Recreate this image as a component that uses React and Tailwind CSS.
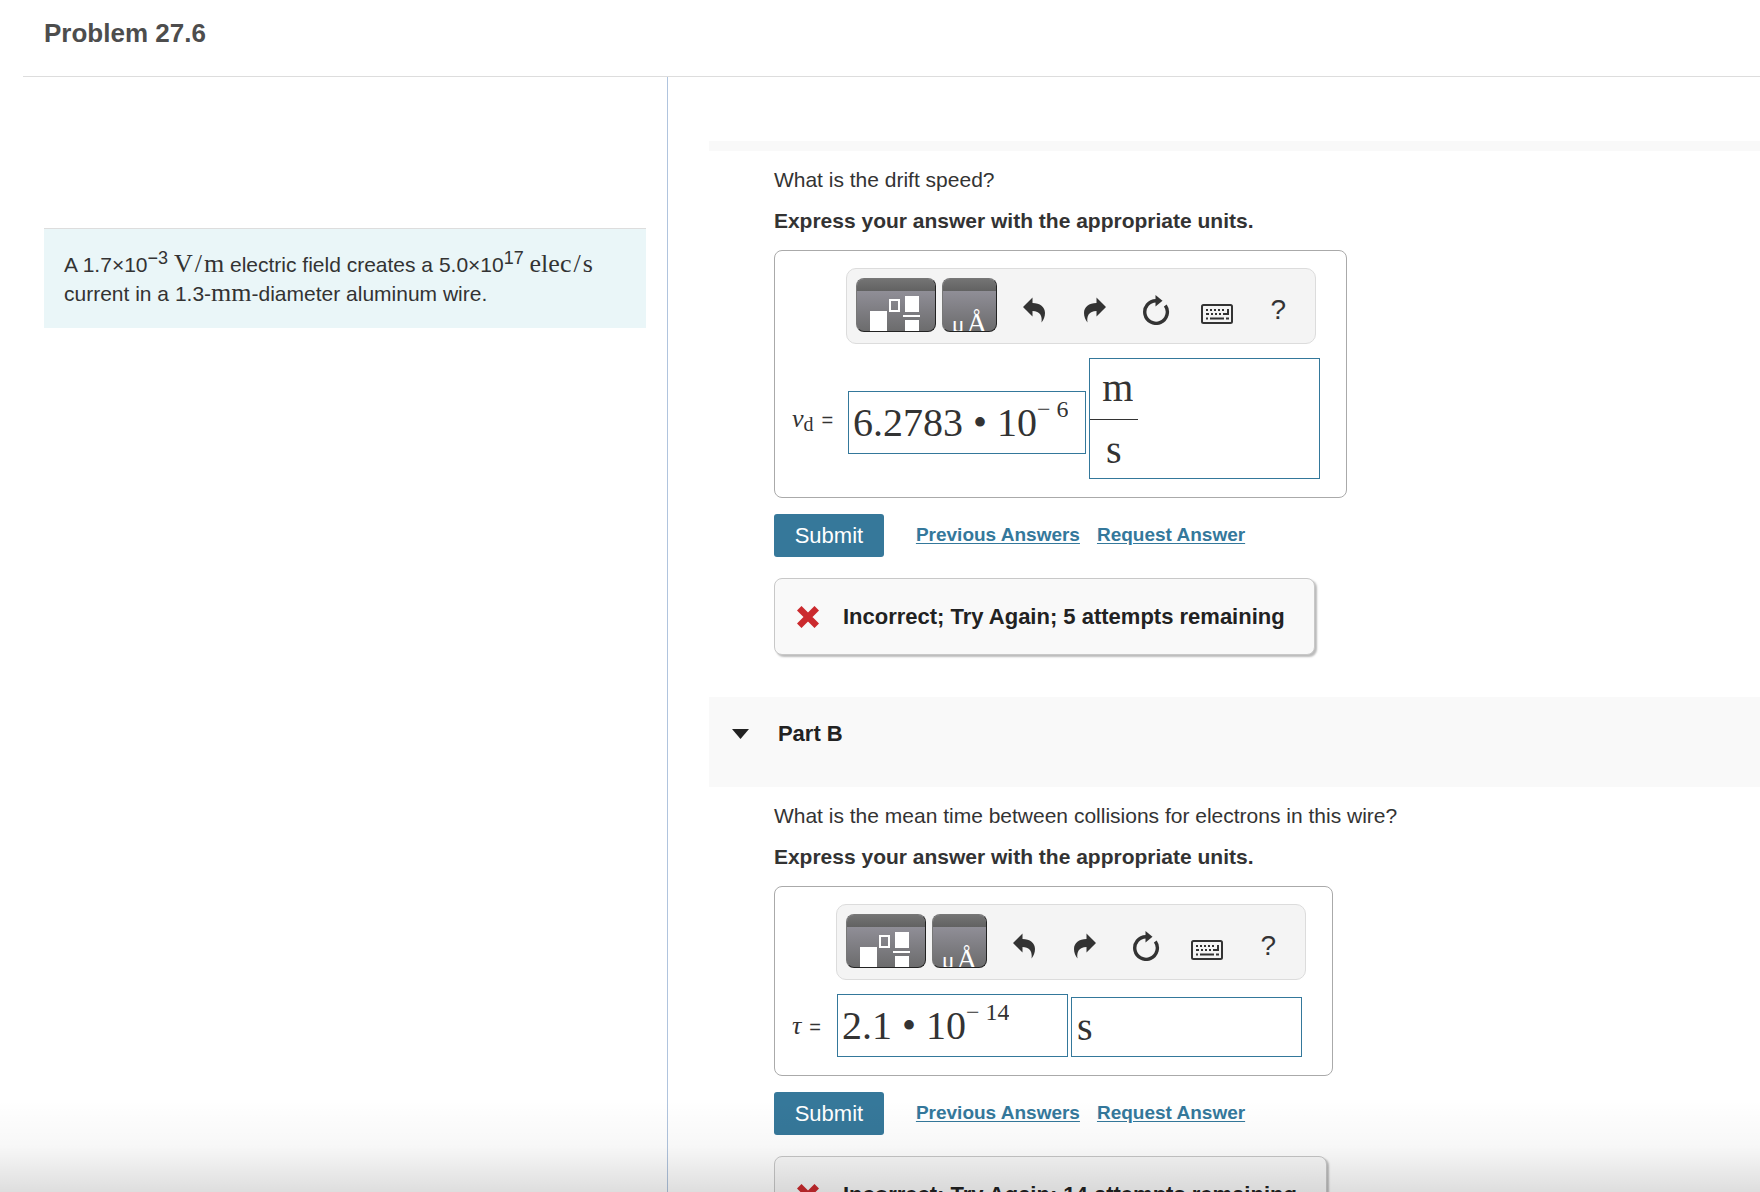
import React from 'react';

const SERIF = "font-['Liberation_Serif',serif]";

const UndoIcon = ({ className = '' }) => (
  <svg width="24" height="26" viewBox="0 0 24 26" fill="#333" aria-hidden="true" className={className}>
    <path d="M1 10 L10.500 0.500 V6 C18 6 23 10 23 16 C23 20 21.500 23 19.500 25.500 C20.500 19 18 14 10.500 14 V19.500 Z" />
  </svg>
);

const ResetIcon = () => (
  <svg width="28" height="30" viewBox="0 0 28 30" fill="none" aria-hidden="true">
    <path d="M23.300 10.500 A11.300 11.300 0 1 1 14 5.700" stroke="#333" strokeWidth="3.400" />
    <path d="M13.500 0 L20.500 5.800 L13.500 11.500 Z" fill="#333" />
  </svg>
);

const KeyboardIcon = () => (
  <svg width="32" height="20" viewBox="0 0 32 20" fill="none" aria-hidden="true">
    <rect x="1" y="1" width="30" height="18" rx="1.500" stroke="#333" strokeWidth="2" />
    <path d="M5 6 H24" stroke="#333" strokeWidth="2" strokeDasharray="2 2" />
    <path d="M5 10 H8 M10 10 H12 M14 10 H16 M18 10 H20 M22 10 H28 M5 14.500 H7 M9 14.500 H23 M25 14.500 H28" stroke="#333" strokeWidth="2" />
    <path d="M27 5 V11" stroke="#333" strokeWidth="2" />
  </svg>
);

const TemplateIcon = () => (
  <svg width="78" height="41" viewBox="0 0 78 41" fill="none" aria-hidden="true">
    <rect x="13" y="20" width="17" height="21" fill="#fff" />
    <rect x="33" y="9" width="9" height="11" stroke="#fff" strokeWidth="2" />
    <rect x="48" y="5" width="14" height="16" fill="#fff" />
    <path d="M46 25 H63" stroke="#fff" strokeWidth="2" />
    <rect x="48" y="29" width="14" height="12" fill="#fff" />
  </svg>
);

const WrongIcon = () => (
  <svg width="22" height="22" viewBox="0 0 22 22" aria-hidden="true">
    <path d="M4.500 4.500 L17.500 17.500 M17.500 4.500 L4.500 17.500" stroke="#cb2a2e" strokeWidth="6.400" strokeLinecap="square" strokeLinejoin="round" />
  </svg>
);

const paletteClass =
  'h-[54px] shrink-0 overflow-hidden rounded-lg border border-[#777] border-r-[#222] border-b-[#222] bg-gradient-to-b from-[#9b99a4] to-[#6c6c6d]';
const toolClass = 'flex w-[61px] items-center justify-center';

const Toolbar = () => (
  <div className="flex h-[76px] w-[470px] rounded-[10px] border border-[#dcdcdc] bg-[#f4f4f4] px-[9px] pt-[9px]">
    <button type="button" aria-label="Templates" className={`${paletteClass} w-20`}>
      <span className="block h-3 bg-gradient-to-b from-[#747474] to-[#626262]"></span>
      <TemplateIcon />
    </button>
    <button type="button" aria-label="Symbols" className={`${paletteClass} ml-[6px] w-[55px]`}>
      <span className="block h-3 bg-gradient-to-b from-[#747474] to-[#626262]"></span>
      <span className={`flex h-10 items-baseline justify-center gap-0.5 pt-5 leading-6 text-white ${SERIF}`}>
        <span className="text-2xl leading-6">μ</span>
        <span className="text-[28px]">Å</span>
      </span>
    </button>
    <div className="ml-[7px] flex h-16">
      <button type="button" aria-label="Undo" className={toolClass}><UndoIcon /></button>
      <button type="button" aria-label="Redo" className={toolClass}><UndoIcon className="-scale-x-100" /></button>
      <button type="button" aria-label="Reset" className={toolClass}><ResetIcon /></button>
      <button type="button" aria-label="Keyboard shortcuts" className={`${toolClass} pt-2`}><KeyboardIcon /></button>
      <button type="button" aria-label="Help" className={`${toolClass} text-[28px] text-[#333]`}>?</button>
    </div>
  </div>
);

const mathInput = `field-sizing-content bg-transparent p-0 outline-none ${SERIF}`;

const ValueField = ({ name, base, exponent, className }) => (
  <div className={`flex h-[63px] items-center border border-[#34789b] bg-white pl-1 ${className}`}>
    <input type="text" aria-label={`${name} value`} defaultValue={base} className={`${mathInput} text-[40px] leading-[48px]`} />
    <input type="text" aria-label={`${name} exponent`} defaultValue={exponent} className={`${mathInput} mb-7 text-2xl leading-7`} />
  </div>
);

const Equals = () => <span className="ml-2 text-xl">=</span>;

const Answer = ({ labelWidth, label, value, unit }) => (
  <form onSubmit={(e) => e.preventDefault()} className="w-fit rounded-lg border border-[#aaa] bg-white pt-[17px] pr-[26px] pb-[18px] pl-[17px]">
    <div className={`grid gap-y-[14px] ${labelWidth}`}>
      <div className="col-start-2">
        <Toolbar />
      </div>
      <div className="col-start-1 self-center">{label}</div>
      <div className="flex items-center gap-[3px] pl-px">
        {value}
        {unit}
      </div>
    </div>
  </form>
);

const Question = ({ question, answer, attempts }) => (
  <div className="pt-[15px] pl-[65px]">
    <p className="leading-7">{question}</p>
    <p className="mt-[13px] leading-7 font-bold">Express your answer with the appropriate units.</p>
    <div className="mt-[15px]">{answer}</div>
    <div className="mt-4 flex items-center text-[19px] font-bold text-[#34789b]">
      <button type="submit" className="h-[43px] w-[110px] rounded-[3px] bg-[#36789a] text-[22px] font-normal text-white">
        Submit
      </button>
      <a href="#previous" className="ml-8 underline underline-offset-2">Previous Answers</a>
      <a href="#request" className="ml-[17px] underline underline-offset-2">Request Answer</a>
    </div>
    <div className="mt-[21px] flex h-[77px] w-fit items-center gap-6 rounded-lg border border-[#c8c8c8] bg-[#f9f9f9] pr-[29px] pl-[22px] text-[22px] font-bold text-[#222] shadow-[2px_2px_2px_#bbb]">
      <WrongIcon />
      <span>Incorrect; Try Again; {attempts} attempts remaining</span>
    </div>
  </div>
);

const Unit = ({ children }) => <span className={`text-[26px] leading-none ${SERIF}`}>{children}</span>;

const App = () => {
  return (
    <div className="relative flex h-screen flex-col overflow-hidden bg-white font-['Liberation_Sans',Arial,sans-serif] text-[21px] text-[#333]">
      <header className="ml-[23px] border-b border-[#ddd] pt-[17px] pb-[27px] pl-[21px]">
        <h1 className="text-[26px] leading-8 font-bold text-[#4d4d4d]">Problem 27.6</h1>
      </header>

      <main className="flex min-h-0 flex-1">
        <section className="w-[37.95%] shrink-0 border-r border-[#b0c4de] pt-[151px] pr-[21px] pl-11">
          <div className="border-t border-[#ddd] bg-[#eaf6f8] px-5 pt-[22px] pb-5 leading-7">
            A 1.7×10<sup className="-top-2 text-lg">−3</sup>{' '}
            <Unit>V<span className="mx-0.5">/</span>m</Unit> electric field creates a 5.0×10
            <sup className="-top-2 text-lg">17</sup>{' '}
            <Unit>elec<span className="mx-0.5">/</span>s</Unit>
            <br />
            current in a 1.3-<Unit>mm</Unit>-diameter aluminum wire.
          </div>
        </section>

        <section className="min-w-0 flex-1 overflow-hidden pt-16 pl-[41px]">
          <div className="h-[10px] bg-[#f9f9f9]"></div>
          <Question
            question="What is the drift speed?"
            attempts={5}
            answer={
              <Answer
                labelWidth="grid-cols-[54px_auto]"
                label={
                  <span>
                    <i className={`text-[26px] ${SERIF}`}>v</i>
                    <sub className={`-bottom-1 text-xl ${SERIF}`}>d</sub>
                    <Equals />
                  </span>
                }
                value={<ValueField name="Drift speed" base="6.2783 • 10" exponent="− 6" className="mt-2 ml-px w-[238px]" />}
                unit={
                  <div className={`h-[121px] w-[231px] border border-[#34789b] text-[40px] ${SERIF}`}>
                    <div className="flex w-12 flex-col items-center">
                      <input type="text" aria-label="Unit numerator" defaultValue="m" className={`${mathInput} mb-1 ml-2 h-14 leading-[48px]`} />
                      <span className="h-px w-full bg-[#333]"></span>
                      <input type="text" aria-label="Unit denominator" defaultValue="s" className={`${mathInput} h-[58px] leading-[48px]`} />
                    </div>
                  </div>
                }
              />
            }
          />

          <div className="mt-[42px] flex h-[90px] items-start bg-[#f9f9f9] pt-[23px] pl-[23px] text-[#222]">
            <button type="button" className="flex items-center gap-[29px] text-[22px] leading-7 font-bold">
              <svg width="17" height="10" viewBox="0 0 17 10" fill="#222" aria-hidden="true">
                <path d="M0 0 H17 L8.500 10 Z" />
              </svg>
              Part B
            </button>
          </div>
          <Question
            question="What is the mean time between collisions for electrons in this wire?"
            attempts={14}
            answer={
              <Answer
                labelWidth="grid-cols-[44px_auto]"
                label={
                  <span>
                    <i className={`text-[26px] ${SERIF}`}>τ</i>
                    <Equals />
                  </span>
                }
                value={<ValueField name="Mean time" base="2.1 • 10" exponent="− 14" className="w-[231px]" />}
                unit={
                  <input
                    type="text"
                    aria-label="Mean time unit"
                    defaultValue="s"
                    className={`h-[60px] w-[231px] self-end border border-[#34789b] bg-white pl-[5px] text-[40px] outline-none ${SERIF}`}
                  />
                }
              />
            }
          />
        </section>
      </main>

      {/* bottom fade over the page */}
      <div className="pointer-events-none absolute inset-x-0 bottom-0 h-[92px] bg-gradient-to-b from-transparent via-black/3 to-black/13"></div>
    </div>
  );
};

export default App;
